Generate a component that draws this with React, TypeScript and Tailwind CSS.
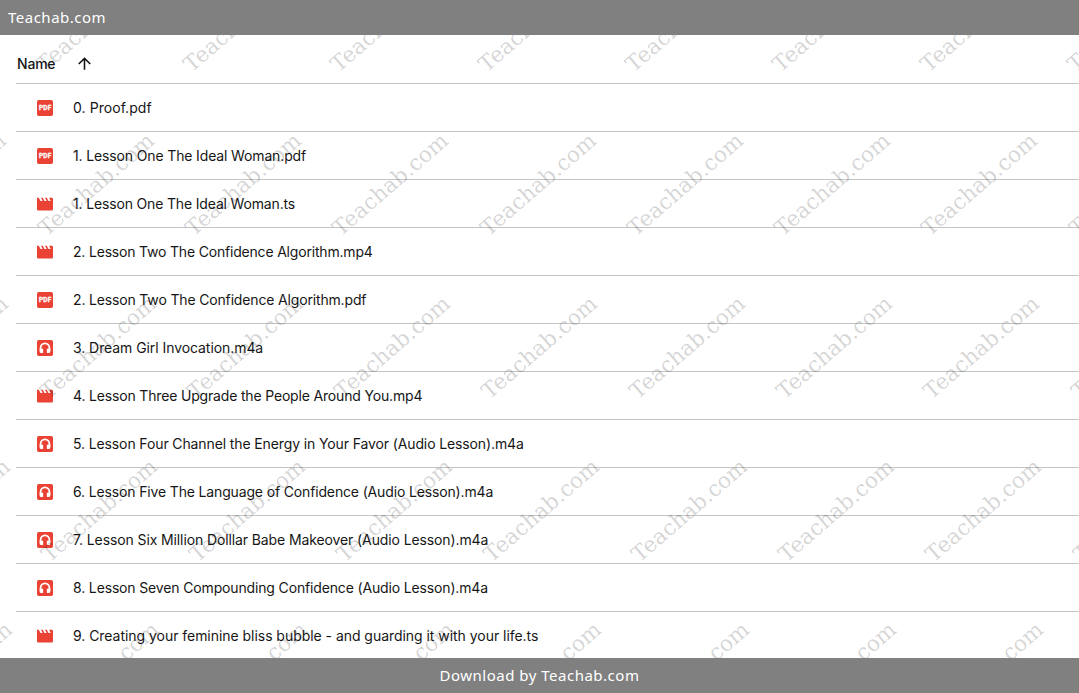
import { MdArrowUpward } from 'react-icons/md'

type FileKind = 'pdf' | 'video' | 'audio'

interface FileItem {
  name: string
  kind: FileKind
  tracking: number
}

const files: FileItem[] = [
  { name: '0. Proof.pdf', kind: 'pdf', tracking: 0.06 },
  { name: '1. Lesson One The Ideal Woman.pdf', kind: 'pdf', tracking: -0.14 },
  { name: '1. Lesson One The Ideal Woman.ts', kind: 'video', tracking: -0.16 },
  { name: '2. Lesson Two The Confidence Algorithm.mp4', kind: 'video', tracking: -0.19 },
  { name: '2. Lesson Two The Confidence Algorithm.pdf', kind: 'pdf', tracking: -0.16 },
  { name: '3. Dream Girl Invocation.m4a', kind: 'audio', tracking: -0.07 },
  { name: '4. Lesson Three Upgrade the People Around You.mp4', kind: 'video', tracking: -0.17 },
  { name: '5. Lesson Four Channel the Energy in Your Favor (Audio Lesson).m4a', kind: 'audio', tracking: -0.12 },
  { name: '6. Lesson Five The Language of Confidence (Audio Lesson).m4a', kind: 'audio', tracking: -0.15 },
  { name: '7. Lesson Six Million Dolllar Babe Makeover (Audio Lesson).m4a', kind: 'audio', tracking: -0.11 },
  { name: '8. Lesson Seven Compounding Confidence (Audio Lesson).m4a', kind: 'audio', tracking: -0.15 },
  { name: '9. Creating your feminine bliss bubble - and guarding it with your life.ts', kind: 'video', tracking: -0.04 },
]

function FileIcon({ kind }: { kind: FileKind }) {
  if (kind === 'video') {
    return (
      <svg viewBox="0 0 16 16" className="size-4 shrink-0">
        <path
          d="M0 1.7h1.800l1.700 3.200h2.200L4 1.700h1.800l1.700 3.200h2.200L8 1.700h1.800l1.700 3.200h2.200L12 1.700h2.600c.8 0 1.400.6 1.400 1.400v9.800c0 .9-.7 1.600-1.600 1.600H1.600C.7 14.500 0 13.800 0 12.900z"
          fill="#ea4335"
        />
      </svg>
    )
  }

  return (
    <svg viewBox="0 0 16 16" className="size-4 shrink-0">
      <rect width="16" height="16" rx="1.8" fill="#ea4335" />
      {kind === 'pdf' ? (
        <text
          x="2"
          y="10.4"
          fontSize="6.4"
          textLength="12.2"
          stroke="#fff"
          strokeWidth="0.35"
          className="fill-white font-['Roboto'] font-bold"
        >
          PDF
        </text>
      ) : (
        <g fill="none" stroke="#fff">
          <path d="M3.600 11V7.700a4.400 4.400 0 0 1 8.800 0V11" strokeWidth="1.800" />
          <path d="M2.700 8.700h3.400v4.300H4.300a1.600 1.600 0 0 1-1.600-1.600zM13.300 8.700H9.900v4.300h1.800a1.600 1.600 0 0 0 1.600-1.600z" fill="#fff" stroke="none" />
        </g>
      )}
    </svg>
  )
}

function Watermark() {
  const rows = [0, 1, 2, 3, 4]
  const cols = [0, 1, 2, 3, 4, 5, 6, 7, 8]

  return (
    <div className="pointer-events-none absolute inset-0 overflow-hidden">
      {rows.map((row) =>
        cols.map((col) => (
          <span
            key={`${row}-${col}`}
            className="absolute origin-bottom-left -rotate-[40.8deg] font-['DejaVu_Serif'] text-[21.7px] leading-none whitespace-nowrap text-black/18"
            style={{ left: -100.6 + col * 147.3 + row * 1.9, top: 19.3 + row * 163.2 }}
          >
            Teachab.com
          </span>
        ))
      )}
    </div>
  )
}

export default function App() {
  return (
    <div className="flex h-[693px] w-full flex-col overflow-hidden bg-white">
      <header className="flex h-[35px] shrink-0 items-center bg-[#808080] px-2 font-['Noto_Sans'] text-[15px] tracking-[0.5px] text-white">
        Teachab.com
      </header>

      <main className="relative min-h-0 flex-1 overflow-hidden pl-4 font-['Inter'] text-[14px] text-[#161616]">
        <div className="flex h-[49px] items-center gap-[20px] border-b border-[#c4c4c4] pt-[9px] pl-px font-medium">
          <span className="tracking-[-0.2px]">Name</span>
          <MdArrowUpward className="size-[19px]" />
        </div>
        <ul>
          {files.map((file) => (
            <li key={file.name} className="flex h-12 items-center gap-5 border-b border-[#c4c4c4] pl-[21px]">
              <FileIcon kind={file.kind} />
              <span className="whitespace-nowrap" style={{ letterSpacing: file.tracking }}>
                {file.name}
              </span>
            </li>
          ))}
        </ul>
        <Watermark />
      </main>

      <footer className="flex h-[35px] shrink-0 items-center justify-center bg-[#808080] font-['Noto_Sans'] text-[15px] tracking-[0.5px] text-white">
        Download by Teachab.com
      </footer>
    </div>
  )
}
